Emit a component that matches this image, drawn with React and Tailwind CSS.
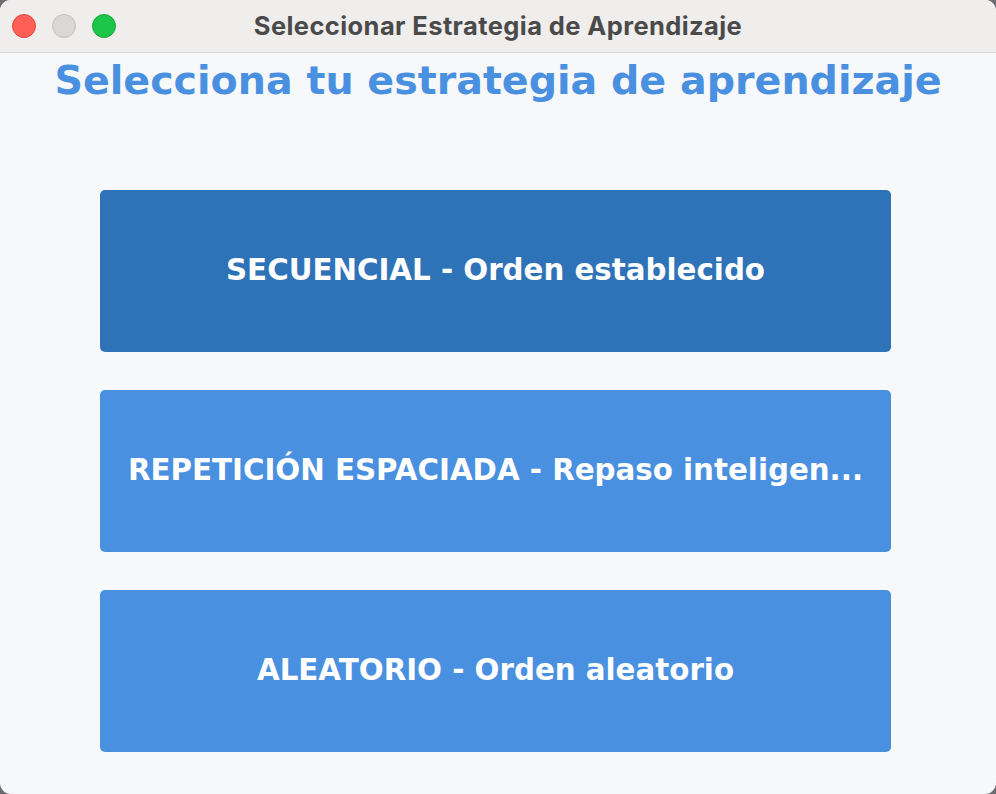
import React from 'react';

const strategies = [
  { label: 'SECUENCIAL - Orden establecido', selected: true },
  { label: 'REPETICIÓN ESPACIADA - Repaso inteligen...', selected: false },
  { label: 'ALEATORIO - Orden aleatorio', selected: false },
];

const App = () => {
  return (
    <div className="w-[996px] h-[794px] bg-[#6b6b70]">
      <div className="w-full h-full rounded-[11px] overflow-hidden bg-[#f7f8fa] flex flex-col">
        {/* barra de título */}
        <div className="h-[53px] shrink-0 bg-[#efeeec] border-b border-[#d6d6d6] flex items-center relative">
          <div className="flex items-center gap-[16px] pl-[12px]">
            <span className="w-[24px] h-[24px] rounded-full bg-[#ff5f57] border border-[#e2463f]" />
            <span className="w-[24px] h-[24px] rounded-full bg-[#d9d8d6] border border-[#c4c3c1]" />
            <span className="w-[24px] h-[24px] rounded-full bg-[#1dc548] border border-[#15a83a]" />
          </div>
          <div className="absolute inset-0 flex items-center justify-center pointer-events-none">
            <span className="text-[25.5px] font-bold text-[#4a4a4a] font-['Inter',sans-serif] tracking-[0.4px]">
              Seleccionar Estrategia de Aprendizaje
            </span>
          </div>
        </div>

        {/* contenido */}
        <div className="flex flex-col items-center">
          <h1 className="mt-[1px] text-[39.6px] leading-[52px] font-bold text-[#4a90e0] font-['DejaVu_Sans',sans-serif]">
            Selecciona tu estrategia de aprendizaje
          </h1>

          <div className="mt-[84px] self-start ml-[100px] flex flex-col gap-[38px] w-[791px]">
            {strategies.map((s) => (
              <button
                key={s.label}
                className={`h-[162px] rounded-[5px] flex items-center justify-center text-white font-bold text-[29.3px] font-['DejaVu_Sans',sans-serif] ${
                  s.selected ? 'bg-[#2e72b8]' : 'bg-[#4a90e0]'
                }`}
              >
                {s.label}
              </button>
            ))}
          </div>
        </div>
      </div>
    </div>
  );
};

export default App;
